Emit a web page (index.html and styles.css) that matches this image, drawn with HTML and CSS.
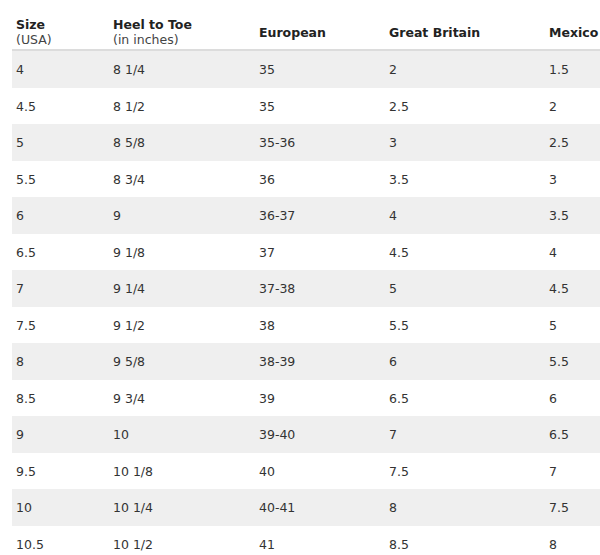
FILE: index.html
```html
<!DOCTYPE html>
<html>
<head>
<meta charset="utf-8">
<link rel="stylesheet" href="styles.css">
</head>
<body>
<table class="sizes">
  <thead>
    <tr>
      <th class="c1">Size<span class="sub">(USA)</span></th>
      <th class="c2">Heel to Toe<span class="sub">(in inches)</span></th>
      <th class="c3">European</th>
      <th class="c4">Great Britain</th>
      <th class="c5">Mexico</th>
    </tr>
  </thead>
  <tbody>
    <tr><td>4</td><td>8 1/4</td><td>35</td><td>2</td><td>1.5</td></tr>
    <tr><td>4.5</td><td>8 1/2</td><td>35</td><td>2.5</td><td>2</td></tr>
    <tr><td>5</td><td>8 5/8</td><td>35-36</td><td>3</td><td>2.5</td></tr>
    <tr><td>5.5</td><td>8 3/4</td><td>36</td><td>3.5</td><td>3</td></tr>
    <tr><td>6</td><td>9</td><td>36-37</td><td>4</td><td>3.5</td></tr>
    <tr><td>6.5</td><td>9 1/8</td><td>37</td><td>4.5</td><td>4</td></tr>
    <tr><td>7</td><td>9 1/4</td><td>37-38</td><td>5</td><td>4.5</td></tr>
    <tr><td>7.5</td><td>9 1/2</td><td>38</td><td>5.5</td><td>5</td></tr>
    <tr><td>8</td><td>9 5/8</td><td>38-39</td><td>6</td><td>5.5</td></tr>
    <tr><td>8.5</td><td>9 3/4</td><td>39</td><td>6.5</td><td>6</td></tr>
    <tr><td>9</td><td>10</td><td>39-40</td><td>7</td><td>6.5</td></tr>
    <tr><td>9.5</td><td>10 1/8</td><td>40</td><td>7.5</td><td>7</td></tr>
    <tr><td>10</td><td>10 1/4</td><td>40-41</td><td>8</td><td>7.5</td></tr>
    <tr><td>10.5</td><td>10 1/2</td><td>41</td><td>8.5</td><td>8</td></tr>
  </tbody>
</table>
</body>
</html>
```
FILE: styles.css
```css
html, body {
  margin: 0;
  padding: 0;
  overflow: hidden;
  background: #fff;
}
body {
  font-family: "DejaVu Sans", Verdana, sans-serif;
  font-size: 12.5px;
  color: #333;
}
.sizes {
  margin: 12px 0 0 12px;
  border-collapse: collapse;
  border-spacing: 0;
  width: 588px;
  table-layout: fixed;
}
.sizes th {
  text-align: left;
  vertical-align: middle;
  font-weight: bold;
  color: #222;
  line-height: 15px;
  padding: 5px 4px 2px;
  border-bottom: 2px solid #dcdcdc;
  white-space: nowrap;
}
.sizes .sub {
  display: block;
  font-weight: normal;
  color: #444;
}
.c1 { width: 89px; }
.c2 { width: 138px; }
.c3 { width: 122px; }
.c4 { width: 152px; }
.sizes td {
  padding: 11px 4px 9px;
  line-height: 16.5px;
  color: #333;
}
.sizes tbody tr:nth-child(odd) td {
  background: #efefef;
}
```
